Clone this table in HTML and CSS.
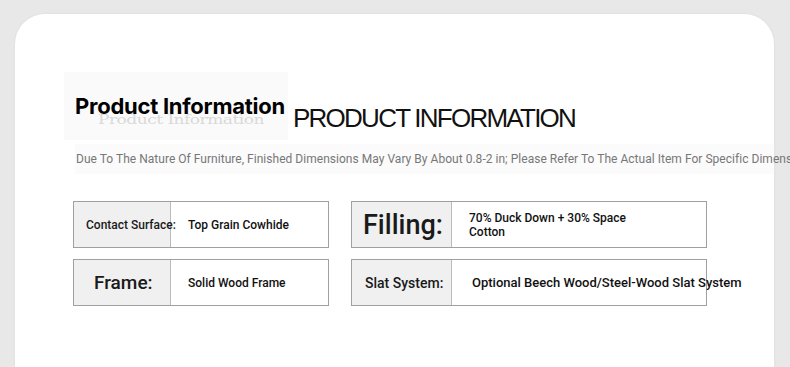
FILE: index.html
```html
<!DOCTYPE html>
<html>
<head>
<meta charset="utf-8">
<link rel="stylesheet" href="styles.css">
</head>
<body>
<div class="page">
  <div class="card">
    <div class="heading">
      <div class="title-box">
        <span class="ghost">Product Information</span>
        <h1 class="title">Product Information</h1>
      </div>
      <div class="title-en">PRODUCT INFORMATION</div>
    </div>
    <p class="note">Due To The Nature Of Furniture, Finished Dimensions May Vary By About 0.8-2 in; Please Refer To The Actual Item For Specific Dimensions</p>
    <div class="grid">
      <div class="row left">
        <div class="label l-contact">Contact Surface:</div>
        <div class="value">Top Grain Cowhide</div>
      </div>
      <div class="row right">
        <div class="label l-filling">Filling:</div>
        <div class="value">70% Duck Down + 30% Space<br>Cotton</div>
      </div>
      <div class="row left">
        <div class="label l-frame">Frame:</div>
        <div class="value">Solid Wood Frame</div>
      </div>
      <div class="row right">
        <div class="label l-slat">Slat System:</div>
        <div class="value v-slat">Optional Beech Wood/Steel-Wood Slat System</div>
      </div>
    </div>
  </div>
</div>
</body>
</html>
```
FILE: styles.css
```css
* { box-sizing: border-box; }
html, body { margin: 0; padding: 0; }
body {
  background: #e8e8e8;
  font-family: Roboto, "Liberation Sans", sans-serif;
  width: 790px;
  height: 367px;
  overflow: hidden;
}
.page {
  padding: 14px 16px 0 15px;
}
.card {
  background: #ffffff;
  border-radius: 30px 30px 0 0;
  height: 353px;
  box-shadow: 0 0 3px rgba(0,0,0,0.06);
  padding: 58px 0 0 49px;
}
.heading {
  display: flex;
  align-items: flex-start;
}
.title-box {
  position: relative;
  width: 224px;
  height: 68px;
  background: #fafafa;
  padding: 21px 0 0 11px;
}
.title {
  position: relative;
  margin: 0;
  font-family: Inter, Roboto, sans-serif;
  font-size: 22px;
  font-weight: 700;
  letter-spacing: -0.25px;
  color: #000;
  line-height: 26px;
}
.ghost {
  position: absolute;
  left: 34px;
  top: 37px;
  font-family: "DejaVu Serif", serif;
  font-size: 17px;
  color: #d9d9d9;
  letter-spacing: -0.5px;
  transform: scaleY(0.8);
}
.title-en {
  font-family: "Liberation Sans", Arial, sans-serif;
  font-size: 26px;
  color: #111;
  margin: 31px 0 0 5px;
  letter-spacing: -1.75px;
  line-height: 30px;
}
.note {
  margin: 4px 0 0 11px;
  font-size: 12px;
  color: #777;
  white-space: nowrap;
  line-height: 30px;
  background: #fbfbfb;
  padding-left: 1px;
  letter-spacing: 0.03px;
}
.grid {
  display: grid;
  grid-template-columns: 256px 356px;
  column-gap: 22px;
  row-gap: 11px;
  margin: 27px 0 0 9px;
}
.row {
  display: flex;
  height: 47px;
  border: 1px solid #a0a0a0;
}
.label {
  flex-shrink: 0;
  background: #f0f0f0;
  display: flex;
  align-items: center;
  color: #1a1a1a;
  font-weight: 500;
  border-right: 1px solid #bbb;
  white-space: nowrap;
}
.left .label { width: 97px; }
.right .label { width: 100px; }
.value {
  display: flex;
  align-items: center;
  font-size: 12px;
  font-weight: 500;
  color: #111;
  line-height: 14px;
  padding-left: 17px;
  white-space: nowrap;
}
.l-contact { font-size: 12px; padding-left: 12px; }
.l-frame { font-size: 19px; padding-left: 20px; }
.l-filling { font-size: 27px; padding-left: 11px; }
.l-slat { font-size: 14px; padding-left: 13px; }
.v-slat { padding-left: 20px; font-size: 13px; }
```
